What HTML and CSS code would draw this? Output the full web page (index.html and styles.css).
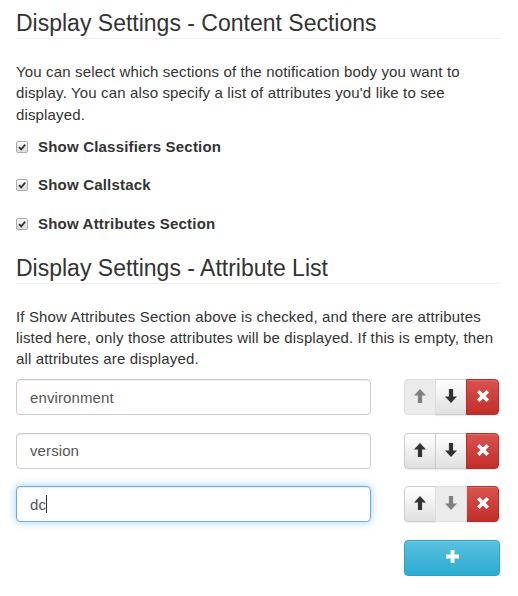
FILE: index.html
```html
<!DOCTYPE html>
<html lang="en">
<head>
<meta charset="utf-8">
<title>Display Settings</title>
<link rel="stylesheet" href="styles.css">
</head>
<body>
<div class="page">
  <h3 class="page-header first">Display Settings - Content Sections</h3>
  <p class="help">You can select which sections of the notification body you want to display. You can also specify a list of attributes you'd like to see displayed.</p>
  <div class="checks">
    <label class="check"><span class="cb"><svg viewBox="0 0 10 10" width="10" height="10"><path d="M2 5.2L4.2 7.4L8.2 2.6" fill="none" stroke="#333" stroke-width="1.8"/></svg></span>Show Classifiers Section</label>
    <label class="check"><span class="cb"><svg viewBox="0 0 10 10" width="10" height="10"><path d="M2 5.2L4.2 7.4L8.2 2.6" fill="none" stroke="#333" stroke-width="1.8"/></svg></span>Show Callstack</label>
    <label class="check"><span class="cb"><svg viewBox="0 0 10 10" width="10" height="10"><path d="M2 5.2L4.2 7.4L8.2 2.6" fill="none" stroke="#333" stroke-width="1.8"/></svg></span>Show Attributes Section</label>
  </div>

  <h3 class="page-header second">Display Settings - Attribute List</h3>
  <p class="help">If Show Attributes Section above is checked, and there are attributes listed here, only those attributes will be displayed. If this is empty, then all attributes are displayed.</p>

  <div class="attr-list">
    <div class="attr-row">
      <input class="form-control" type="text" value="environment">
      <div class="btn-group">
        <button class="btn btn-default disabled" type="button"><svg class="ico" viewBox="0 0 12 14" width="12" height="14"><path d="M6 0L12 6.6H8.1V14H3.9V6.6H0Z"/></svg></button>
        <button class="btn btn-default" type="button"><svg class="ico" viewBox="0 0 12 14" width="12" height="14"><path d="M6 14L12 7.4H8.1V0H3.9V7.4H0Z"/></svg></button>
        <button class="btn btn-danger" type="button"><svg class="ico" viewBox="0 0 12 12" width="12" height="12"><path d="M0 2.6L2.6 0L6 3.4L9.4 0L12 2.6L8.6 6L12 9.4L9.4 12L6 8.6L2.6 12L0 9.4L3.4 6Z"/></svg></button>
      </div>
    </div>
    <div class="attr-row">
      <input class="form-control" type="text" value="version">
      <div class="btn-group">
        <button class="btn btn-default" type="button"><svg class="ico" viewBox="0 0 12 14" width="12" height="14"><path d="M6 0L12 6.6H8.1V14H3.9V6.6H0Z"/></svg></button>
        <button class="btn btn-default" type="button"><svg class="ico" viewBox="0 0 12 14" width="12" height="14"><path d="M6 14L12 7.4H8.1V0H3.9V7.4H0Z"/></svg></button>
        <button class="btn btn-danger" type="button"><svg class="ico" viewBox="0 0 12 12" width="12" height="12"><path d="M0 2.6L2.6 0L6 3.4L9.4 0L12 2.6L8.6 6L12 9.4L9.4 12L6 8.6L2.6 12L0 9.4L3.4 6Z"/></svg></button>
      </div>
    </div>
    <div class="attr-row">
      <div class="input-wrap">
        <input class="form-control focus" type="text" value="dc">
        <span class="caret-line"></span>
      </div>
      <div class="btn-group">
        <button class="btn btn-default" type="button"><svg class="ico" viewBox="0 0 12 14" width="12" height="14"><path d="M6 0L12 6.6H8.1V14H3.9V6.6H0Z"/></svg></button>
        <button class="btn btn-default disabled" type="button"><svg class="ico" viewBox="0 0 12 14" width="12" height="14"><path d="M6 14L12 7.4H8.1V0H3.9V7.4H0Z"/></svg></button>
        <button class="btn btn-danger" type="button"><svg class="ico" viewBox="0 0 12 12" width="12" height="12"><path d="M0 2.6L2.6 0L6 3.4L9.4 0L12 2.6L8.6 6L12 9.4L9.4 12L6 8.6L2.6 12L0 9.4L3.4 6Z"/></svg></button>
      </div>
    </div>
    <div class="attr-row">
      <div></div>
      <button class="btn btn-info add" type="button"><svg class="ico" viewBox="0 0 13 13" width="13" height="13"><path d="M4.6 0H8.4V4.6H13V8.4H8.4V13H4.6V8.4H0V4.6H4.6Z"/></svg></button>
    </div>
  </div>
</div>
</body>
</html>
```

FILE: styles.css
```css
* { box-sizing: border-box; }

html, body {
  margin: 0;
  padding: 0;
  background: #fff;
}

body {
  font-family: "Liberation Sans", Arial, Helvetica, sans-serif;
  font-size: 15px;
  line-height: 1.42857;
  color: #333;
}

.page {
  padding: 0 18px 0 16px;
}

.page-header {
  font-size: 23px;
  font-weight: 500;
  line-height: 26px;
  margin: 0;
  padding-bottom: 2px;
  border-bottom: 1px solid #eee;
  color: #333;
}

.page-header.first { margin-top: 10px; }
.page-header.second { margin-top: 20.5px; }

.help {
  margin: 22px 0 0;
  letter-spacing: 0.15px;
}

.checks {
  margin-top: 10.5px;
  display: flex;
  flex-direction: column;
  gap: 17px;
}

.check {
  display: flex;
  align-items: flex-start;
  font-weight: bold;
  letter-spacing: 0.2px;
  height: 21.43px;
}

.cb {
  width: 12px;
  height: 12px;
  margin-top: 5px;
  margin-right: 10px;
  border: 1px solid #ababab;
  border-radius: 2px;
  background: linear-gradient(to bottom, #fcfcfc, #dcdcdc);
  display: flex;
  align-items: center;
  justify-content: center;
}

.cb svg { display: block; }

.attr-list {
  margin-top: 9.7px;
  display: flex;
  flex-direction: column;
  gap: 17.5px;
}

.attr-row {
  display: grid;
  grid-template-columns: 1fr 96px;
  column-gap: 33px;
  height: 36px;
}

.input-wrap {
  position: relative;
}

.form-control {
  width: 100%;
  height: 36px;
  padding: 6px 13px;
  font-family: "Liberation Sans", Arial, Helvetica, sans-serif;
  font-size: 15px;
  letter-spacing: 0.1px;
  color: #555;
  background: #fff;
  border: 1px solid #ccc;
  border-radius: 4px;
  box-shadow: inset 0 1px 1px rgba(0, 0, 0, .075);
  outline: none;
}

.form-control.focus {
  border-color: #66afe9;
  box-shadow: inset 0 1px 1px rgba(0, 0, 0, .075), 0 0 8px rgba(102, 175, 233, .6);
}

.caret-line {
  position: absolute;
  left: 30px;
  top: 9px;
  width: 1px;
  height: 18px;
  background: #333;
}

.btn-group {
  display: flex;
  height: 36px;
}

.btn {
  height: 36px;
  width: 32px;
  padding: 0;
  margin: 0;
  border: 1px solid #ccc;
  display: flex;
  align-items: center;
  justify-content: center;
  cursor: pointer;
  box-shadow: inset 0 1px 0 rgba(255, 255, 255, .15), 0 1px 1px rgba(0, 0, 0, .075);
}

.btn-group .btn + .btn { margin-left: -1px; }
.btn-group .btn:first-child { border-radius: 4px 0 0 4px; }
.btn-group .btn:last-child { border-radius: 0 4px 4px 0; width: 33px; }

.ico { display: block; margin-top: -2px; }

.btn-default {
  background: linear-gradient(to bottom, #fff 0%, #e0e0e0 100%);
  border-color: #ccc;
  fill: #333;
}

.btn-default.disabled {
  background: #ebebeb;
  border-color: #dedede;
  fill: #808080;
  box-shadow: none;
  position: relative;
  z-index: 0;
}

.btn-danger {
  background: linear-gradient(to bottom, #d9534f 0%, #c12e2a 100%);
  border-color: #b92c28;
  fill: #fff;
}

.btn-info {
  background: linear-gradient(to bottom, #5bc0de 0%, #2aabd2 100%);
  border-color: #28a4c9;
  fill: #fff;
}

.btn.add {
  width: 96px;
  border-radius: 4px;
}
```
